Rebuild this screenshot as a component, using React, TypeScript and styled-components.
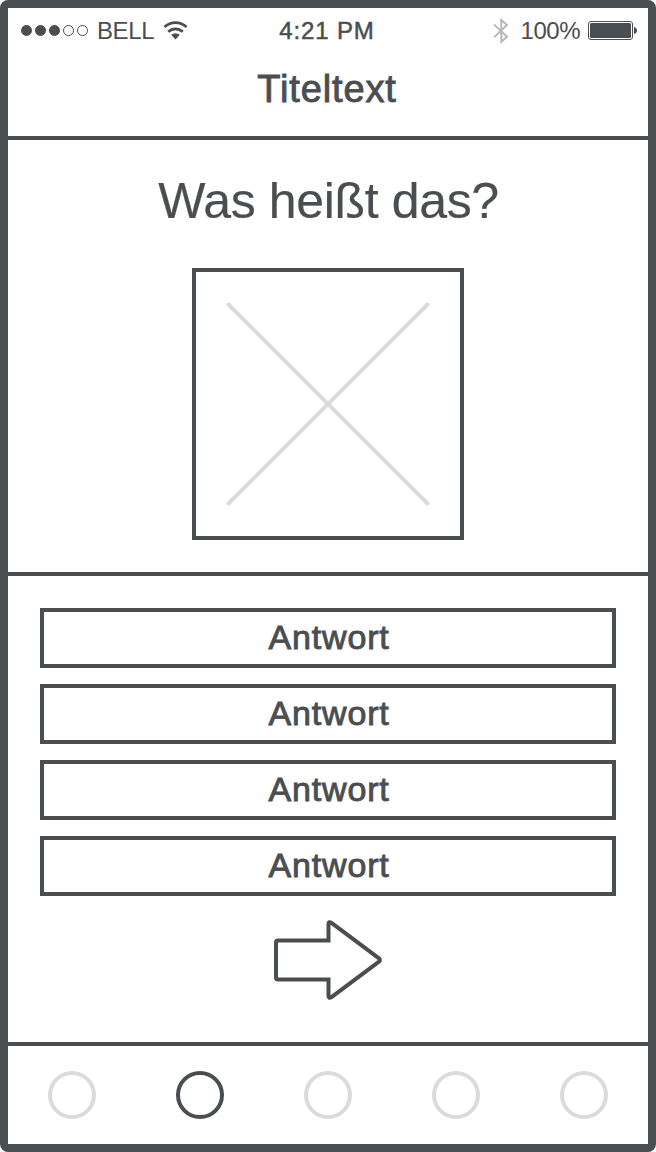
import React from "react";
import styled, { createGlobalStyle } from "styled-components";

const ink = "#4a4e50";
const faint = "#dadcdb";

const GlobalStyle = createGlobalStyle`
  * { box-sizing: border-box; }
  html, body { margin: 0; padding: 0; background: #fff; }
`;

const Phone = styled.div`
  width: 656px;
  height: 1152px;
  display: flex;
  flex-direction: column;
  border: 8px solid ${ink};
  border-radius: 8px;
  background: #fff;
  color: ${ink};
  font-family: "Liberation Sans", Arial, sans-serif;
`;

const Header = styled.header`
  height: 132px;
  border-bottom: 4px solid ${ink};
`;

const StatusBar = styled.div`
  display: grid;
  grid-template-columns: 1fr auto 1fr;
  align-items: center;
  height: 45px;
  padding: 0 11px 0 13px;
`;

const StatusGroup = styled.div<{ $gap: number; $end?: boolean }>`
  display: flex;
  align-items: center;
  justify-content: ${(p) => (p.$end ? "flex-end" : "flex-start")};
  gap: ${(p) => p.$gap}px;

  svg { display: block; flex: none; }
`;

const Signal = styled.div`
  display: flex;
  gap: 3px;
`;

const SignalDot = styled.span<{ $on: boolean }>`
  width: 11px;
  height: 11px;
  border: 1px solid ${ink};
  border-radius: 50%;
  background: ${(p) => (p.$on ? ink : "transparent")};
`;

const Label = styled.span<{ $spacing?: number; $weight?: number; $trail?: number }>`
  margin-right: ${(p) => p.$trail ?? 0}px;
  font-size: 24px;
  line-height: 1;
  letter-spacing: ${(p) => p.$spacing ?? 0}px;
  -webkit-text-stroke: ${(p) => p.$weight ?? 0}px ${ink};
  white-space: nowrap;
`;

const Title = styled.h1`
  margin: 14px 0 0;
  padding-right: 2px;
  text-align: center;
  font-size: 38px;
  font-weight: 400;
  line-height: 44px;
  letter-spacing: 0.85px;
  -webkit-text-stroke: 0.9px ${ink};
`;

const Question = styled.section`
  height: 436px;
  display: flex;
  flex-direction: column;
  align-items: center;
  border-bottom: 4px solid ${ink};
`;

const QuestionText = styled.h2`
  margin: 31px 0 37px;
  padding-left: 1px;
  font-size: 50px;
  font-weight: 400;
  line-height: 60px;
  letter-spacing: -0.35px;
  -webkit-text-stroke: 0.2px ${ink};
`;

const ImageBox = styled.div`
  width: 272px;
  height: 272px;
  border: 4px solid ${ink};

  svg { display: block; }
`;

const Answers = styled.section`
  flex: 1;
  display: flex;
  flex-direction: column;
  align-items: center;
  gap: 16px;
  padding: 32px 32px 0;
`;

const Answer = styled.button`
  width: 100%;
  height: 60px;
  padding: 0 0 2px 2px;
  border: 4px solid ${ink};
  background: #fff;
  color: ${ink};
  font: 400 34px/1 "Liberation Sans", Arial, sans-serif;
  letter-spacing: 0.85px;
  -webkit-text-stroke: 0.9px ${ink};
`;

const NextButton = styled.button`
  display: block;
  margin-top: 8px;
  padding: 0;
  border: 0;
  background: none;

  svg { display: block; }
`;

const Pager = styled.nav`
  height: 102px;
  display: flex;
  justify-content: space-between;
  align-items: center;
  padding: 0 40px;
  border-top: 4px solid ${ink};
`;

const PageDot = styled.span<{ $active: boolean }>`
  width: 48px;
  height: 48px;
  border: 4px solid ${(p) => (p.$active ? ink : faint)};
  border-radius: 50%;
`;

const WifiIcon = () => (
  <svg width="25" height="19" viewBox="0 0 25 19" fill="none" stroke={ink}>
    <path d="M1.4 6.1Q6.3 1.6 12.5 1.6T23.6 6.1" strokeWidth="2.7" />
    <path d="M5.2 10.8Q8.5 7.8 12.5 7.8T19.8 10.8" strokeWidth="2.7" />
    <path d="M8.2 13.8Q12.5 10.8 16.8 13.8L12.5 18.4z" fill={ink} stroke="none" />
  </svg>
);

const BluetoothIcon = () => (
  <svg width="16" height="28" viewBox="0 0 16 28" fill="none" stroke="#b6b8b9" strokeWidth="2">
    <path d="M1 7.4L14 19.8L8.3 24.8V3L14 8L1 20.4" />
  </svg>
);

const BatteryIcon = () => (
  <svg width="49" height="19" viewBox="0 0 49 19">
    <rect x="0.5" y="0.5" width="44" height="18" rx="2.5" fill="none" stroke={ink} />
    <rect x="2" y="2" width="41" height="15" rx="1.5" fill={ink} />
    <path d="M46 6q3 1 3 3.5t-3 3.5z" fill={ink} />
  </svg>
);

const dots = [true, true, true, false, false];
const answers = ["Antwort", "Antwort", "Antwort", "Antwort"];
const pages = [0, 1, 2, 3, 4];

export default function App() {
  return (
    <>
      <GlobalStyle />
      <Phone>
        <Header>
          <StatusBar>
            <StatusGroup $gap={9}>
              <Signal>
                {dots.map((on, i) => (
                  <SignalDot key={i} $on={on} />
                ))}
              </Signal>
              <Label $spacing={-0.4}>BELL</Label>
              <WifiIcon />
            </StatusGroup>
            <Label $spacing={0.85} $weight={0.5} $trail={4}>4:21 PM</Label>
            <StatusGroup $gap={12} $end>
              <BluetoothIcon />
              <Label $spacing={-0.5} $trail={-4}>100%</Label>
              <BatteryIcon />
            </StatusGroup>
          </StatusBar>
          <Title>Titeltext</Title>
        </Header>
        <Question>
          <QuestionText>Was heißt das?</QuestionText>
          <ImageBox>
            <svg width="264" height="264" viewBox="0 0 264 264" stroke={faint} strokeWidth="4" strokeLinecap="round">
              <path d="M32.5 32.5L231.5 231.5M231.5 32.5L32.5 231.5" />
            </svg>
          </ImageBox>
        </Question>
        <Answers>
          {answers.map((text, i) => (
            <Answer key={i}>{text}</Answer>
          ))}
          <NextButton aria-label="Weiter">
            <svg width="108" height="80" viewBox="0 0 108 80" fill="none" stroke={ink} strokeWidth="4">
              <path d="M54.5 20.5H4Q2 20.5 2 22.5V57.5Q2 59.5 4 59.5H54.5V76Q54.5 79 57.5 77L105 41.6Q107 40 105 38.4L57.5 3Q54.5 1 54.5 4Z" />
            </svg>
          </NextButton>
        </Answers>
        <Pager>
          {pages.map((page) => (
            <PageDot key={page} $active={page === 1} />
          ))}
        </Pager>
      </Phone>
    </>
  );
}
